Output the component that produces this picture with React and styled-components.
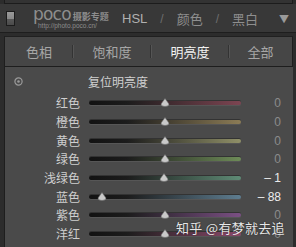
import React from "react";
import styled, { createGlobalStyle } from "styled-components";

const GlobalStyle = createGlobalStyle`
  html, body {
    margin: 0;
    padding: 0;
    background: #2c2c2c;
  }
  body {
    font-family: "Noto Sans CJK SC", "Noto Sans", sans-serif;
  }
`;

const rows = [
  { name: "红色", value: 0, color: "#7d4552" },
  { name: "橙色", value: 0, color: "#8c7c56" },
  { name: "黄色", value: 0, color: "#909068" },
  { name: "绿色", value: 0, color: "#6e8c58" },
  { name: "浅绿色", value: -1, color: "#5f8c76" },
  { name: "蓝色", value: -88, color: "#5e7d90" },
  { name: "紫色", value: 0, color: "#7b5084" },
  { name: "洋红", value: 0, color: "#8d4a6c" },
];

const tabs = ["色相", "饱和度", "明亮度", "全部"];

export default function App() {
  return (
    <Frame>
      <GlobalStyle />
      <TopStrip />
      <Header>
        <PanelIcon />
        <Logo>
          <LogoTop>
            <LogoWord>poco</LogoWord>
            <LogoCn>摄影专题</LogoCn>
          </LogoTop>
          <LogoUrl>http://photo.poco.cn/</LogoUrl>
        </Logo>
        <HeadItem $bright>HSL</HeadItem>
        <Slash>/</Slash>
        <HeadItem>颜色</HeadItem>
        <Slash>/</Slash>
        <HeadItem>黑白</HeadItem>
        <Arrow>▼</Arrow>
      </Header>
      <TabBar>
        {tabs.map((t, i) => (
          <Tab key={t} $active={i === 2} $first={i === 0}>
            {t}
          </Tab>
        ))}
      </TabBar>
      <Panel>
        <ResetRow>
          <Target>
            <svg width="9" height="9" viewBox="0 0 9 9">
              <circle cx="4.5" cy="4.5" r="3.6" fill="none" stroke="#9a9a9a" strokeWidth="1.2" />
              <circle cx="4.5" cy="4.5" r="1.3" fill="#9a9a9a" />
            </svg>
          </Target>
          <ResetLabel>复位明亮度</ResetLabel>
        </ResetRow>
        <Rows>
          {rows.map((r) => (
            <Row key={r.name}>
              <Label>{r.name}</Label>
              <Track $color={r.color}>
                <Thumb style={{ left: `calc(4px + ${(r.value + 100) / 200} * (100% - 8px))` }}>
                  <svg width="10" height="9" viewBox="0 0 10 9">
                    <path d="M5 0.5 L9 6 Q9 8.5 5 8.5 Q1 8.5 1 6 Z" fill="#c9c9c9" stroke="#6a6a6a" strokeWidth="0.6" />
                  </svg>
                </Thumb>
              </Track>
              <Value $zero={r.value === 0}>
                {r.value === 0 ? "0" : `– ${Math.abs(r.value)}`}
              </Value>
            </Row>
          ))}
        </Rows>
        <Watermark>知乎 @有梦就去追</Watermark>
      </Panel>
    </Frame>
  );
}

const Frame = styled.div`
  position: relative;
  width: 296px;
  height: 247px;
  overflow: hidden;
  background: #2c2c2c;
  padding: 0 3px 0 4px;
  box-sizing: border-box;
  display: flex;
  flex-direction: column;
`;

const TopStrip = styled.div`
  height: 3px;
  background: #333;
  border-bottom: 1px solid #1c1c1c;
  border-left: 1px solid #1c1c1c;
  border-right: 1px solid #1c1c1c;
`;

const Header = styled.div`
  height: 28px;
  background: #383838;
  display: flex;
  align-items: center;
  border-bottom: 1px solid #1e1e1e;
  margin: 0 -4px;
  padding: 0 4px 0 6px;
`;

const PanelIcon = styled.div`
  flex-shrink: 0;
  width: 7px;
  height: 13px;
  border: 1px solid #1c1c1c;
  background: linear-gradient(#9a9a9a 0%, #8a8a8a 50%, #5a5a5a 52%, #4a4a4a 100%);
  margin-right: 18px;
`;

const Logo = styled.div`
  flex: 0 0 89px;
  min-width: 0;
  display: flex;
  flex-direction: column;
  margin-top: -1px;
`;

const LogoTop = styled.div`
  display: flex;
  align-items: baseline;
  height: 14px;
  white-space: nowrap;
`;

const LogoWord = styled.span`
  font-family: "DejaVu Sans", sans-serif;
  font-size: 17px;
  line-height: 14px;
  color: #8d8d8d;
  letter-spacing: -0.8px;
  margin-right: 2px;
`;

const LogoCn = styled.span`
  font-size: 9px;
  font-weight: 700;
  color: #8d8d8d;
  line-height: 11px;
`;

const LogoUrl = styled.span`
  font-family: "Liberation Sans", sans-serif;
  font-size: 6.5px;
  color: #8d8d8d;
  margin: 1px 0 0 5px;
  line-height: 7px;
  white-space: nowrap;
`;

const HeadItem = styled.span`
  font-family: "Liberation Sans", "Noto Sans CJK SC", sans-serif;
  font-size: 13px;
  color: ${(p) => (p.$bright ? "#b0b0b0" : "#8e8e8e")};
  margin-top: 1px;
`;

const Slash = styled.span`
  font-family: "Liberation Sans", sans-serif;
  font-size: 12px;
  color: #6e6e6e;
  margin: 1px 13px 0;
`;

const Arrow = styled.span`
  margin-left: auto;
  font-size: 10px;
  color: #9a9a9a;
  margin-right: 4px;
`;

const TabBar = styled.div`
  height: 29px;
  display: grid;
  grid-template-columns: 68px 78px 78px 1fr;
  background: #464646;
  border-top: 1px solid #202020;
  border-bottom: 1px solid #1e1e1e;
  border-left: 1px solid #1e1e1e;
  border-right: 1px solid #1e1e1e;
  margin-top: 3px;
`;

const Tab = styled.div`
  display: flex;
  align-items: center;
  justify-content: center;
  font-size: 13px;
  color: ${(p) => (p.$active ? "#f2f2f2" : "#a6a6a6")};
  position: relative;
  &::before {
    content: "";
    display: ${(p) => (p.$first ? "none" : "block")};
    position: absolute;
    left: -1px;
    top: 8px;
    height: 13px;
    width: 1px;
    background: #333;
    box-shadow: 1px 0 0 #555;
  }
`;

const Panel = styled.div`
  position: relative;
  flex: 1;
  background: #4a4a4a;
  border-left: 1px solid #1e1e1e;
  padding-top: 5px;
`;

const ResetRow = styled.div`
  height: 19px;
  display: flex;
  align-items: center;
`;

const Target = styled.div`
  width: 9px;
  height: 9px;
  margin-left: 9px;
  display: flex;
`;

const ResetLabel = styled.span`
  font-size: 12px;
  color: #d0d0d0;
  margin-left: 65px;
`;

const Rows = styled.div`
  padding-top: 3px;
`;

const Row = styled.div`
  height: 18.7px;
  display: grid;
  grid-template-columns: 75px 152px 1fr;
  column-gap: 9px;
  align-items: center;
`;

const Label = styled.span`
  text-align: right;
  font-size: 12px;
  color: #cfcfcf;
  line-height: 18px;
`;

const Track = styled.div`
  position: relative;
  height: 4px;
  border-radius: 2px;
  background: linear-gradient(90deg, #121212 0%, #1c1c1c 25%, ${(p) => p.$color} 100%);
  box-shadow: 0 -1px 0 rgba(0, 0, 0, 0.3), 0 1px 0 rgba(255, 255, 255, 0.07);
`;

const Thumb = styled.div`
  position: absolute;
  top: -3px;
  width: 10px;
  height: 9px;
  margin-left: -5px;
  display: flex;
`;

const Value = styled.span`
  font-family: "Liberation Sans", sans-serif;
  font-size: 12px;
  text-align: right;
  padding-right: 12px;
  color: ${(p) => (p.$zero ? "#8c8c8c" : "#ececec")};
`;

const Watermark = styled.div`
  position: absolute;
  left: 171px;
  top: 151px;
  font-size: 13px;
  color: rgba(255, 255, 255, 0.88);
  text-shadow: 0 0 2px rgba(0, 0, 0, 0.4);
  letter-spacing: 0.3px;
  white-space: nowrap;
`;
